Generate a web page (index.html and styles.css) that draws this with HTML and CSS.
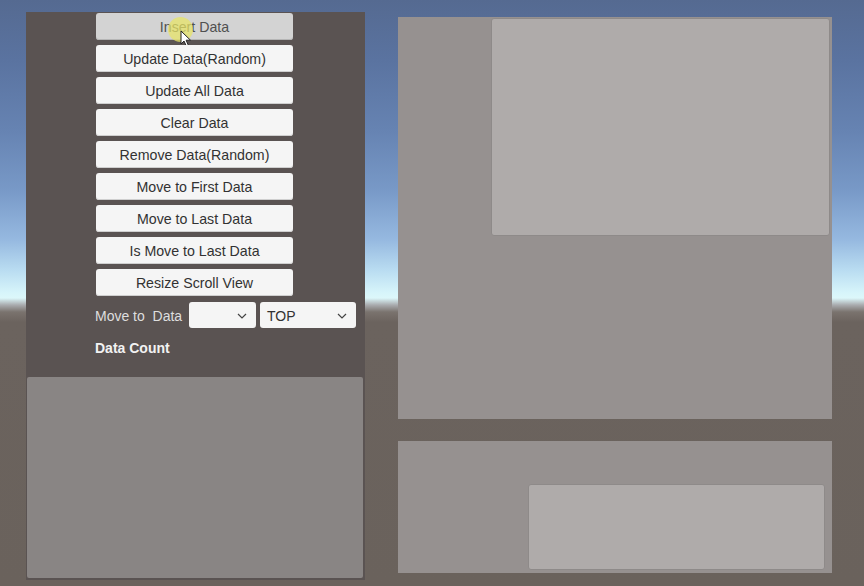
FILE: index.html
```html
<!DOCTYPE html>
<html>
<head>
<meta charset="utf-8">
<link rel="stylesheet" href="styles.css">
</head>
<body>
<div class="scene">
  <div class="left">
    <div class="controls">
      <div class="btn pressed">Insert Data
        <span class="hl"></span>
        <svg class="cursor" width="12" height="18" viewBox="0 0 12 18"><path d="M1 1 L1 14 L4 11 L6.5 16.5 L8.5 15.6 L6.1 10.2 L10.5 10.2 Z" fill="#fff" stroke="#222" stroke-width="1" stroke-linejoin="round"/></svg>
      </div>
      <div class="btn">Update Data(Random)</div>
      <div class="btn">Update All Data</div>
      <div class="btn">Clear Data</div>
      <div class="btn">Remove Data(Random)</div>
      <div class="btn">Move to First Data</div>
      <div class="btn">Move to Last Data</div>
      <div class="btn">Is Move to Last Data</div>
      <div class="btn">Resize Scroll View</div>
      <div class="moverow">
        <span class="lbl">Move to&nbsp; Data</span>
        <div class="dd dd-small"><span></span><svg class="chev" width="10" height="6" viewBox="0 0 10 6"><path d="M1 1 L5 5 L9 1" fill="none" stroke="#444" stroke-width="1.2"/></svg></div>
        <div class="dd dd-wide"><span>TOP</span><svg class="chev" width="10" height="6" viewBox="0 0 10 6"><path d="M1 1 L5 5 L9 1" fill="none" stroke="#444" stroke-width="1.2"/></svg></div>
      </div>
      <div class="count">Data Count</div>
    </div>
    <div class="listbox"></div>
  </div>
  <div class="right">
    <div class="panel top">
      <div class="inner inner-top"></div>
    </div>
    <div class="panel bottom">
      <div class="inner inner-bottom"></div>
    </div>
  </div>
</div>
</body>
</html>
```
FILE: styles.css
```css
html, body {
  margin: 0;
  padding: 0;
}
body {
  width: 864px;
  height: 586px;
  overflow: hidden;
  font-family: "Liberation Sans", Arial, sans-serif;
}
.scene {
  width: 864px;
  height: 586px;
  box-sizing: border-box;
  display: flex;
  align-items: flex-start;
  padding: 12px 0 0 26px;
  background: linear-gradient(to bottom,
    #556a91 0px,
    #5a73a0 60px,
    #6683b2 130px,
    #7899c7 190px,
    #96b9e0 240px,
    #b9dcf1 270px,
    #d6f4fa 292px,
    #dcf7fa 298px,
    #a9abae 305px,
    #7a736e 312px,
    #6b635e 322px,
    #6a625c 586px);
}
.left {
  width: 339px;
  height: 568px;
  background: #5a5352;
  display: flex;
  flex-direction: column;
}
.controls {
  display: flex;
  flex-direction: column;
  gap: 5px;
  padding: 1px 0 0 70px;
}
.btn {
  position: relative;
  width: 197px;
  height: 27px;
  box-sizing: border-box;
  padding-top: 2px;
  background: #f5f5f5;
  border-radius: 3px;
  box-shadow: inset 0 -1px 0 #cfcfcf;
  color: #323232;
  font-size: 14.2px;
  line-height: 25px;
  text-align: center;
}
.btn.pressed {
  background: #d3d3d3;
  color: #505050;
  box-shadow: inset 0 -1px 0 #b5b5b5;
}
.hl {
  position: absolute;
  left: 72px;
  top: 4px;
  width: 25px;
  height: 25px;
  border-radius: 50%;
  background: rgba(232, 228, 100, 0.72);
}
.cursor {
  position: absolute;
  left: 84px;
  top: 17px;
}
.moverow {
  display: flex;
  align-items: center;
  height: 26px;
  margin-top: 1px;
  margin-left: -1px;
}
.lbl {
  color: #dedede;
  font-size: 14px;
  width: 94px;
  padding-top: 1px;
}
.dd {
  height: 26px;
  box-sizing: border-box;
  background: #f5f5f5;
  border-radius: 3px;
  display: flex;
  align-items: center;
  justify-content: space-between;
  padding: 1px 9px 0 7px;
  color: #323232;
  font-size: 14px;
}
.dd-small {
  width: 67px;
  margin-right: 4px;
}
.dd-wide {
  width: 96px;
}
.count {
  color: #f2f2f2;
  font-weight: bold;
  font-size: 14px;
  margin-top: 7px;
  margin-left: -1px;
}
.listbox {
  margin: auto 2px 2px 1px;
  height: 201px;
  background: #898584;
  border-radius: 2px;
}
.right {
  margin: 5px 0 0 33px;
  width: 434px;
  display: flex;
  flex-direction: column;
  gap: 22px;
}
.panel {
  background: #969190;
  display: flex;
  flex-direction: column;
  align-items: flex-start;
}
.panel.top {
  height: 402px;
}
.panel.bottom {
  height: 132px;
}
.inner {
  background: #afabaa;
  border: 1px solid #8e8a89;
  border-radius: 3px;
  box-sizing: border-box;
}
.inner-top {
  margin: 1px 0 0 93px;
  width: 339px;
  height: 218px;
}
.inner-bottom {
  margin: 43px 0 0 130px;
  width: 297px;
  height: 86px;
}
```
